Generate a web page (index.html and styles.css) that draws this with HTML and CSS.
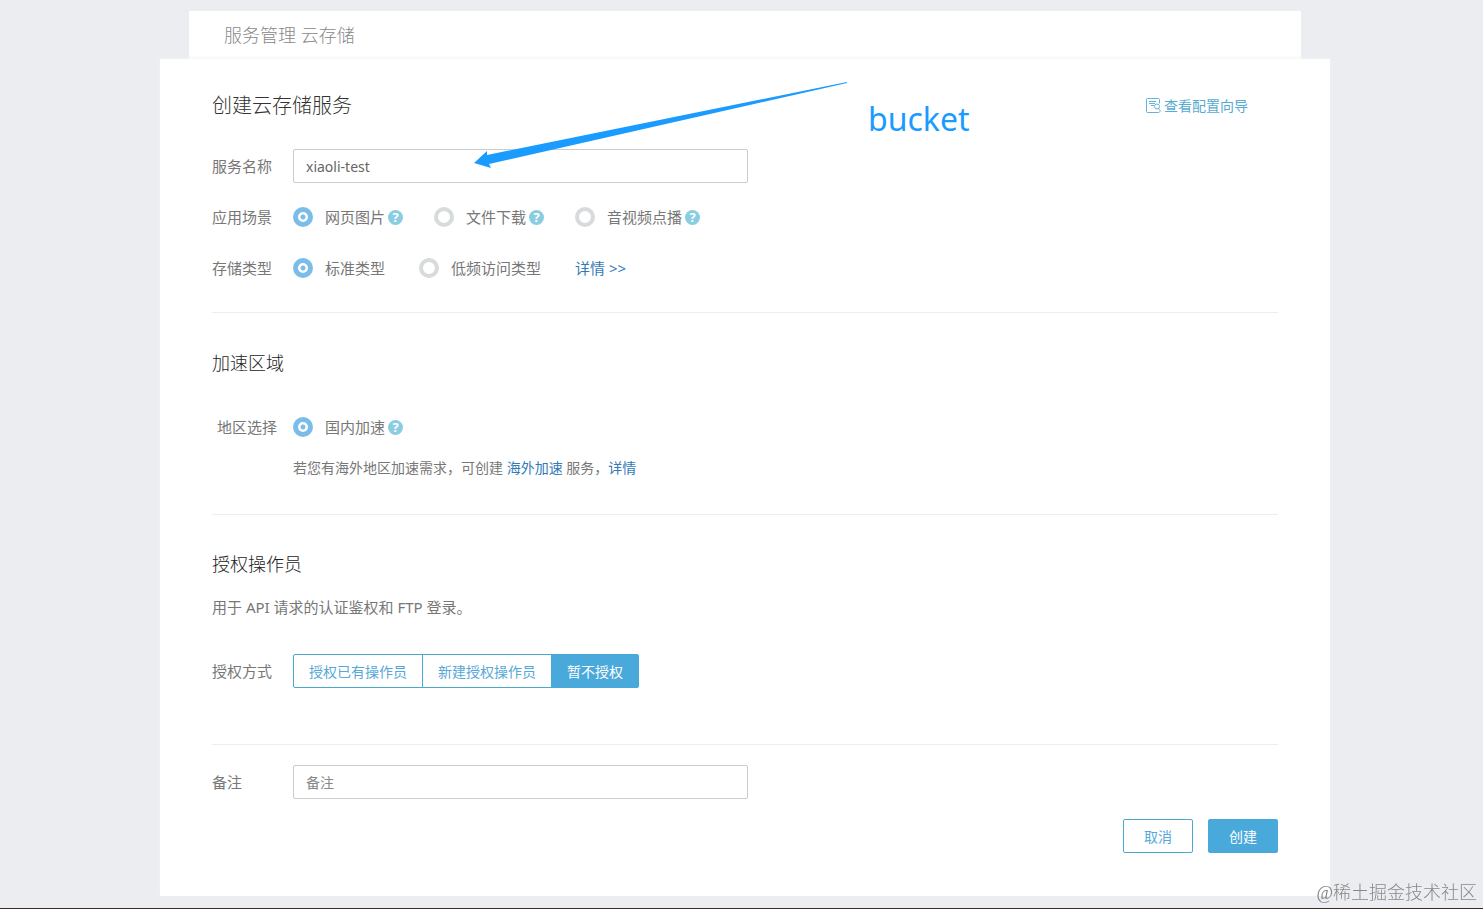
FILE: index.html
```html
<!DOCTYPE html>
<html lang="zh-CN">
<head>
    <meta charset="UTF-8">
    <meta name="viewport" content="width=device-width, initial-scale=1.0">
    <title>创建云存储服务</title>
    <link rel="stylesheet" href="styles.css">
</head>
<body>
    <header class="topbar">服务管理 云存储</header>

    <main class="card">
        <form>
            <!-- 基本信息 -->
            <section class="basic">
                <div class="title-row">
                    <h1>创建云存储服务</h1>
                    <a class="guide" href="#">
                        <svg width="16" height="16" viewBox="0 0 16 16" fill="none" stroke="#66b3d6">
                            <path d="M13.5 5.5v-4q0-1-1-1h-11q-1 0-1 1v12q0 1 1 1h11q1 0 1-1M3 3.5h7M3 5.5h6M5 7.5h3"/>
                            <circle cx="11" cy="8.500" r="2.500"/>
                            <path d="M12.500 10.500l2.500 3"/>
                        </svg>
                        查看配置向导
                    </a>
                </div>
                <div class="row">
                    <label class="name" for="serviceName">服务名称</label>
                    <input type="text" id="serviceName" value="xiaoli-test">
                </div>
                <div class="row" role="radiogroup" aria-label="应用场景">
                    <span class="name">应用场景</span>
                    <div class="options">
                        <label><input type="radio" name="scene" checked>网页图片<i class="help">?</i></label>
                        <label><input type="radio" name="scene">文件下载<i class="help">?</i></label>
                        <label><input type="radio" name="scene">音视频点播<i class="help">?</i></label>
                    </div>
                </div>
                <div class="row" role="radiogroup" aria-label="存储类型">
                    <span class="name">存储类型</span>
                    <div class="options wide">
                        <label><input type="radio" name="storage" checked>标准类型</label>
                        <label><input type="radio" name="storage">低频访问类型</label>
                        <a href="#">详情 &gt;&gt;</a>
                    </div>
                </div>

                <!-- 标注 -->
                <div class="note">
                    <svg width="374" height="92" viewBox="0 0 374 92" fill="#1a9bff">
                        <path d="M0 81L13 69L13 73L373 0L373 1L15 82L17 86z"/>
                    </svg>
                    <span>bucket</span>
                </div>
            </section>

            <!-- 加速区域 -->
            <section class="region">
                <h2>加速区域</h2>
                <div class="row" role="radiogroup" aria-label="地区选择">
                    <span class="name indent">地区选择</span>
                    <div class="options">
                        <label><input type="radio" name="region" checked>国内加速<i class="help">?</i></label>
                    </div>
                </div>
                <p class="tip">若您有海外地区加速需求，可创建 <a href="#">海外加速</a> 服务，<a href="#">详情</a></p>
            </section>

            <!-- 授权操作员 -->
            <section class="operator">
                <h2>授权操作员</h2>
                <p>用于 API 请求的认证鉴权和 FTP 登录。</p>
                <div class="row">
                    <span class="name">授权方式</span>
                    <div class="btn-group">
                        <button type="button">授权已有操作员</button>
                        <button type="button">新建授权操作员</button>
                        <button type="button" class="active">暂不授权</button>
                    </div>
                </div>
            </section>

            <section class="remark">
                <div class="row">
                    <label class="name" for="remark">备注</label>
                    <input type="text" id="remark" placeholder="备注">
                </div>
                <div class="actions">
                    <button type="button">取消</button>
                    <button type="submit" class="active">创建</button>
                </div>
            </section>
        </form>
    </main>

    <div class="watermark">@稀土掘金技术社区</div>
    <div class="taskbar"></div>
</body>
</html>
```
FILE: styles.css
```css
* {
    box-sizing: border-box;
}
body {
    margin: 0;
    padding: 11px 0 12px 7px;
    background-color: #ebedf1;
    color: #777;
    font-family: "Noto Sans", "Noto Sans CJK SC", sans-serif;
    font-size: 15px;
    line-height: 24px;
}
h1, h2, p {
    margin: 0;
    font-weight: normal;
}
h1, h2 {
    font-weight: 300;
    line-height: 30px;
}
h1 {
    font-size: 20px;
    color: #333;
}
h2 {
    font-size: 18px;
    color: #222;
}
a {
    color: #337ab7;
    text-decoration: none;
}
.topbar {
    max-width: 1112px;
    height: 48px;
    margin: 0 auto;
    padding: 0 35px;
    background-color: #fff;
    color: #888;
    font-size: 18px;
    font-weight: 300;
    line-height: 48px;
}
.card {
    position: relative;
    max-width: 1170px;
    margin: 0 auto;
    padding: 32px 52px 43px;
    background-color: #fff;
    box-shadow: 0 -1px 4px #f3f3f4;
}
section + section {
    border-top: 1px solid #eee;
}
.title-row {
    display: flex;
    justify-content: space-between;
    align-items: center;
    margin-bottom: 28px;
}
.guide {
    display: flex;
    align-items: center;
    gap: 2px;
    margin-right: 30px;
    color: #56abd0;
    font-size: 14px;
}
.row {
    display: flex;
    align-items: center;
    min-height: 34px;
}
.row + .row {
    margin-top: 17px;
}
.name {
    flex: 0 0 81px;
}
.indent {
    padding-left: 5px;
}
input[type="text"] {
    width: 455px;
    height: 34px;
    padding: 0 12px;
    border: 1px solid #ccc;
    border-radius: 2px;
    color: #666;
    font-family: inherit;
    font-size: 14px;
}
input::placeholder {
    color: #888;
}
.options {
    display: flex;
    gap: 31px;
}
.wide {
    gap: 34px;
}
.options label {
    display: flex;
    align-items: center;
}
input[type="radio"] {
    appearance: none;
    width: 20px;
    height: 20px;
    margin: 0 12px 0 0;
    border: 4px solid #d8dbdb;
    border-radius: 50%;
    background-color: #fff;
}
input[type="radio"]:checked {
    border-width: 5px;
    border-color: #7bbde8;
    background: radial-gradient(circle, #7bbde8 2px, #fff 3px);
}
.help {
    width: 15px;
    height: 15px;
    margin-left: 3px;
    border-radius: 50%;
    background-color: #8bcde0;
    color: #fff;
    font-size: 13px;
    font-style: normal;
    font-weight: bold;
    line-height: 15px;
    text-align: center;
}
.basic {
    position: relative;
    padding-bottom: 27px;
}
.note {
    position: absolute;
    top: -9px;
    left: 262px;
    display: flex;
    gap: 20px;
    color: #1a9bff;
    font-size: 32px;
    line-height: 74px;
    pointer-events: none;
}
.region {
    padding: 35px 0 34px;
}
.region .row {
    margin-top: 32px;
}
.tip {
    margin: 12px 0 0 81px;
    font-size: 14px;
}
.operator {
    padding: 34px 0 56px;
}
.operator p {
    margin: 16px 0 35px;
}
button {
    height: 34px;
    padding: 0 15px 1px;
    border: 1px solid #4aa9cf;
    background-color: #fff;
    color: #56a8d8;
    font-family: inherit;
    font-size: 14px;
    cursor: pointer;
}
.active {
    border-color: #4aa9db;
    background-color: #4aa9db;
    color: #fff;
}
.btn-group {
    display: flex;
}
.btn-group button + button {
    margin-left: -1px;
}
.btn-group button:first-child {
    border-radius: 2px 0 0 2px;
}
.btn-group button:last-child {
    border-radius: 0 2px 2px 0;
}
.remark {
    padding-top: 20px;
}
.actions {
    display: flex;
    justify-content: flex-end;
    gap: 15px;
    margin-top: 20px;
}
.actions button {
    width: 70px;
    border-radius: 2px;
}
.watermark {
    position: fixed;
    right: 6px;
    bottom: 4px;
    color: #888;
    font-family: "Liberation Serif", "Noto Sans CJK SC", serif;
    font-size: 18px;
    font-weight: 300;
}
.taskbar {
    position: fixed;
    right: 0;
    bottom: 0;
    left: 0;
    height: 1px;
    background-color: #3a2a2a;
}
```
